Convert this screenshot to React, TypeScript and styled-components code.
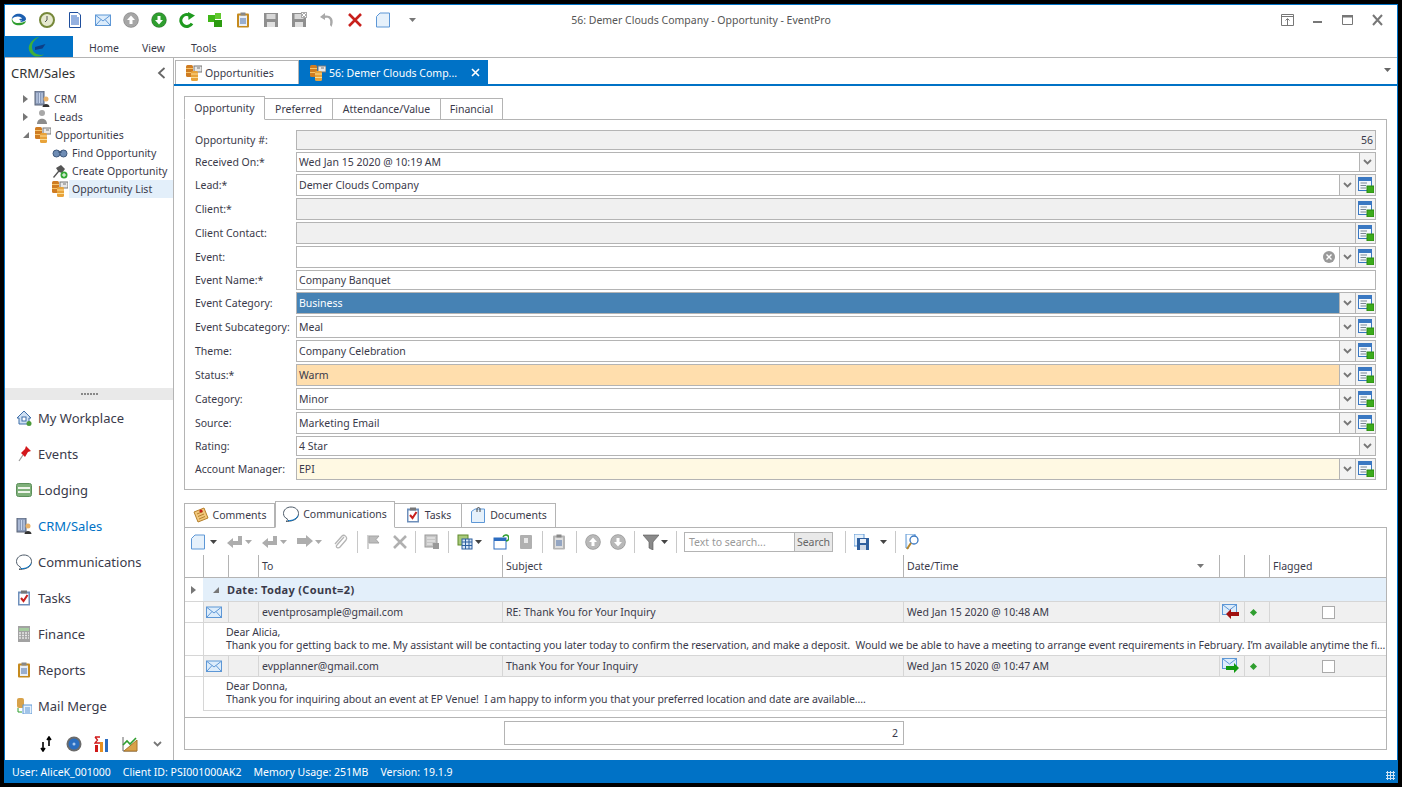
import React from "react";
import styled, { createGlobalStyle } from "styled-components";

const GlobalStyle = createGlobalStyle`
  html, body { margin: 0; padding: 0; background: #000; }
  * { box-sizing: border-box; }
  body { font-family: "Noto Sans", "Liberation Sans", sans-serif; font-size: 10.5px; color: #3a3a4a; }
`;

const BLUE = "#0072c6";
const LINE = "#b4b4b4";

/* ---------- icons ---------- */
const Ico = ({ s = 16, children }: { s?: number; children: React.ReactNode }) => (
  <svg width={s} height={s} viewBox="0 0 16 16" style={{ display: "block", flexShrink: 0 }}>
    {children}
  </svg>
);

const Logo = () => (
  <Ico>
    <path d="M15 9C14 13 9 14 5 13C2 12 0 9 1 6C1 9 4 11 7 11C10 11 13 10 15 9Z" fill="#2f9e2f" />
    <path d="M1 7C1 3 6 1 10 2C13 3 15 5 15 7C15 9 12 10 9 10C11 9 12 7 10 5.5C8 4 4 4 1 7Z" fill="#1c5fb0" />
    <path d="M8 7L12 6.5L10 9Z" fill="#1c5fb0" />
  </Ico>
);
const AppLogo = () => (
  <Ico s={24}>
    <path d="M11 1C5 3 2 8 5 12C7 15 11 15 14 13C10 14 6 12 6 8C6 5 8 3 11 1Z" fill="#3fae3a" />
    <path d="M8 8L15 6L13 9L8 10Z" fill="#0d3f86" />
  </Ico>
);
const Clock = () => (
  <Ico>
    <circle cx="8" cy="8" r="7" fill="#e6e9cf" stroke="#76883a" strokeWidth="2" />
    <path d="M8 4V8L6 10" fill="none" stroke="#555" />
  </Ico>
);
const DocLines = () => (
  <Ico>
    <path d="M2.5.5H11L13.5 3V15.5H2.5Z" fill="#fff" stroke="#1f4e9c" />
    <path d="M4 4H10M4 6H12M4 8H12M4 10H12M4 12H12" stroke="#2a62c0" />
  </Ico>
);
const Mail = () => (
  <Ico>
    <rect x=".5" y="3" width="15" height="10.5" fill="#dcecfb" stroke="#5d97d6" />
    <path d="M1 3.5L8 9L15 3.5M1 13L6 7.5M15 13L10 7.5" fill="none" stroke="#5d97d6" />
  </Ico>
);
const CircleArrow = ({ c, up }: { c: string; up?: boolean }) => (
  <Ico>
    <circle cx="8" cy="8" r="7.5" fill={c} stroke="#0003" />
    <path d={up ? "M8 3.5L12 8H9.5V12H6.5V8H4Z" : "M8 12.5L12 8H9.5V4H6.5V8H4Z"} fill="#fff" />
  </Ico>
);
const Refresh = () => (
  <Ico>
    <path d="M13 11.5A6 6 0 1 1 11 3.4" fill="none" stroke="#1f9a1f" strokeWidth="3" />
    <path d="M9 0L16 3.5L9.5 8Z" fill="#1f9a1f" />
  </Ico>
);
const Cubes = () => (
  <Ico>
    <rect x="1" y="3" width="7" height="7" fill="#3fb618" />
    <rect x="8" y="1" width="6" height="6" fill="#62c92f" />
    <rect x="7" y="8" width="8" height="7" fill="#2c9b10" />
  </Ico>
);
const Clipboard = ({ c = "#c58a1e", f = "#e8eef7" }: { c?: string; f?: string }) => (
  <Ico>
    <rect x="2" y="1.5" width="12" height="14" rx="1" fill={c} />
    <rect x="4" y="3.5" width="8" height="10.5" fill={f} />
    <rect x="5.5" y=".5" width="5" height="3" fill="#888" />
    <path d="M5 7H11M5 9H11M5 11H11" stroke="#4b6ea8" />
  </Ico>
);
const Floppy = ({ x }: { x?: boolean }) => (
  <Ico>
    <path d="M1 1H15V15H1Z" fill="#8f8f8f" />
    <rect x="3.5" y="2" width="9" height="5" fill="#d8d8d8" />
    <rect x="4" y="10" width="8" height="5" fill="#e0e0e0" />
    {x && <path d="M10 0H16V6H10Z" fill="#aaa" />}
    {x && <path d="M11 1L15 5M15 1L11 5" stroke="#fff" />}
  </Ico>
);
const Undo = () => (
  <Ico>
    <path d="M6 1L1 5L6 8V6C10 5 12 7 11 13L12.5 15C15.5 8 13 3 6 3.5Z" fill="#a9a9a9" />
  </Ico>
);
const RedX = ({ c = "#c8201c" }: { c?: string }) => (
  <Ico>
    <path d="M2 2L14 14M14 2L2 14" stroke={c} strokeWidth="2.6" />
  </Ico>
);
const Page = ({ c = "#5d97d6" }: { c?: string }) => (
  <Ico>
    <path d="M1.5 4.5L5 1H14.5V15H1.5Z" fill="#e6f1fb" stroke={c} />
  </Ico>
);
const Opp = () => (
  <Ico>
    <rect x="8" y="1" width="8" height="6" fill="#e8e8e8" stroke="#777" />
    <path d="M11 3H14" stroke="#777" />
    <rect x="0" y="0" width="7" height="12" rx="1.5" fill="#cf7c22" />
    <rect x="0" y="3" width="7" height="1" fill="#f6c46a" />
    <rect x="0" y="7" width="7" height="1" fill="#f6c46a" />
    <rect x="5" y="6" width="7" height="10" rx="1.5" fill="#e8a33a" />
    <rect x="5" y="8.5" width="7" height="1" fill="#fbdc96" />
    <rect x="5" y="12" width="7" height="1" fill="#fbdc96" />
  </Ico>
);
const Crm = () => (
  <Ico>
    <rect x="1" y="0" width="9" height="14" fill="#8a9ab8" stroke="#5a6478" />
    <path d="M3 2V12M5.5 2V12M8 2V12" stroke="#c9d6ee" />
    <circle cx="12" cy="8" r="2.5" fill="#e9b26a" />
    <path d="M8.5 16C8.5 12 15.5 12 15.5 16Z" fill="#333" />
  </Ico>
);
const Person = () => (
  <Ico>
    <circle cx="8" cy="4" r="3" fill="#a8a8a8" />
    <path d="M3 15C3 8 13 8 13 15Z" fill="#8c8c8c" />
  </Ico>
);
const Binoculars = () => (
  <Ico>
    <circle cx="4.5" cy="8.5" r="3.5" fill="#6f8db5" stroke="#40597d" />
    <circle cx="11.5" cy="8.5" r="3.5" fill="#6f8db5" stroke="#40597d" />
    <rect x="6.5" y="6" width="3" height="2" fill="#40597d" />
  </Ico>
);
const PinPlus = () => (
  <Ico>
    <path d="M1 14L6 8L4 5L9 2L13 6L10 10L7 9L2 15Z" fill="#555" />
    <circle cx="12" cy="12" r="3.5" fill="#35a835" />
    <path d="M12 10V14M10 12H14" stroke="#fff" />
  </Ico>
);
const House = () => (
  <Ico>
    <path d="M1 8L8 1L15 8H13V14H3V8Z" fill="#cfe0f3" stroke="#3f6ea8" />
    <rect x="6" y="7" width="4" height="4" fill="#fff" stroke="#3f6ea8" />
    <circle cx="13" cy="13.5" r="2.5" fill="#4c9a3a" />
  </Ico>
);
const RedPin = () => (
  <Ico>
    <path d="M3 15L7 9" stroke="#999" strokeWidth="1.2" />
    <path d="M5 7L9 3L10 0L15 5L12 6L9 11Z" fill="#d3181c" />
  </Ico>
);
const Bed = () => (
  <Ico>
    <rect x=".5" y="1.5" width="15" height="13" rx="2" fill="#7fb07a" stroke="#5c8f5a" />
    <rect x="2" y="5" width="12" height="2" fill="#eef5ea" />
    <rect x="2" y="9" width="12" height="2" fill="#eef5ea" />
  </Ico>
);
const Bubble = () => (
  <Ico>
    <path d="M8 1C3.5 1 .5 4 .5 7.5C.5 10 2 12 4.5 13C4.5 14 4 15 3 15.5C8 15.5 11 14 12 13.5C14 12.5 15.5 10.5 15.5 7.5C15.5 4 12.5 1 8 1Z" fill="#fff" stroke="#4d5a68" />
    <path d="M5 14.5C9 14.8 13 13.5 15 9.5" fill="none" stroke={BLUE} />
  </Ico>
);
const TasksIco = () => (
  <Ico>
    <rect x="2" y="1.5" width="12" height="14" fill="#6e8fbb" />
    <rect x="3.5" y="3.5" width="9" height="10.5" fill="#fff" />
    <rect x="5" y=".5" width="6" height="3" fill="#777" />
    <path d="M5 8L7.5 11L11.5 5" fill="none" stroke="#c8201c" strokeWidth="2" />
  </Ico>
);
const Calc = () => (
  <Ico>
    <rect x="2" y="0" width="12" height="16" fill="#a2a2a2" />
    <rect x="3" y="2" width="10" height="3" fill="#a6cca0" />
    <path d="M3 7H13M3 9.5H13M3 12H13" stroke="#e6e6e6" strokeDasharray="2 1" strokeWidth="1.4" />
  </Ico>
);
const Merge = () => (
  <Ico>
    <rect x="1" y="0" width="7" height="10" rx="2" fill="#d8a24a" />
    <path d="M2 10V14H6" fill="none" stroke="#2f9e2f" />
    <rect x="7" y="7" width="9" height="9" fill="#e6f1fb" stroke="#5d97d6" />
    <path d="M9 10H14M9 12H14M9 14H14" stroke="#5d97d6" />
  </Ico>
);
const Sort = () => (
  <Ico>
    <path d="M5 6V14M3 12L5 15L7 12M11 10V1M9 4L11 1L13 4" fill="none" stroke="#000" strokeWidth="1.6" />
  </Ico>
);
const Disc = () => (
  <Ico>
    <circle cx="8" cy="8" r="7.5" fill="#6b6b6b" />
    <circle cx="8" cy="8" r="5.5" fill="#2a6ec0" />
    <circle cx="8" cy="8" r="1.5" fill="#a9c8ee" />
  </Ico>
);
const SigmaBars = () => (
  <Ico>
    <path d="M1 1H6M1 1L3.5 4L1 7H6" fill="none" stroke="#d01818" strokeWidth="1.3" />
    <rect x="1" y="9" width="3" height="7" fill="#d01818" />
    <rect x="6" y="6" width="3" height="10" fill="#e89020" />
    <rect x="11" y="3" width="3" height="13" fill="#2c6cc0" />
  </Ico>
);
const ChartIco = () => (
  <Ico>
    <path d="M1 1V15H15" fill="none" stroke="#666" />
    <path d="M2 15L15 4V15Z" fill="#d9a24a" stroke="#a8742a" />
    <path d="M1 9L5 5L8 8L14 2" fill="none" stroke="#2f9e2f" strokeWidth="1.6" />
  </Ico>
);
const Lookup = () => (
  <Ico>
    <rect x=".5" y=".5" width="13" height="13" fill="#f4f8fd" stroke="#3a78c2" />
    <rect x="1" y="1" width="12" height="3" fill="#3a78c2" />
    <path d="M2.5 6H9M2.5 8.5H8M2.5 11H8" stroke="#7b8794" />
    <rect x="9" y="9" width="7" height="7" fill="#3cab1c" stroke="#2a8a10" />
  </Ico>
);
const ClearIco = () => (
  <svg width={12} height={12} viewBox="0 0 12 12" style={{ display: "block" }}>
    <circle cx="6" cy="6" r="6" fill="#999" />
    <path d="M3.5 3.5L8.5 8.5M8.5 3.5L3.5 8.5" stroke="#fff" strokeWidth="1.4" />
  </svg>
);
const Chevron = ({ c = "#777" }: { c?: string }) => (
  <svg width={9} height={6} viewBox="0 0 9 6" style={{ display: "block" }}>
    <path d="M1 1L4.5 4.5L8 1" fill="none" stroke={c} strokeWidth="1.8" />
  </svg>
);
const Caret = ({ c = "#444" }: { c?: string }) => (
  <svg width={7} height={4} viewBox="0 0 7 4" style={{ display: "block" }}>
    <path d="M0 0H7L3.5 4Z" fill={c} />
  </svg>
);
const Arrow = ({ c, right }: { c: string; right?: boolean }) => (
  <svg width={18} height={16} viewBox="0 0 18 16" style={{ display: "block" }}>
    <rect x=".5" y=".5" width="14" height="10" fill="#dcecfb" stroke="#5d97d6" />
    <path d="M1 1L7.5 6L14 1" fill="none" stroke="#5d97d6" />
    {right ? <path d="M4 8H12V5L17 10L12 15V12H4Z" fill={c} /> : <path d="M17 8H9V5L4 10L9 15V12H17Z" fill={c} />}
  </svg>
);
const Filter = () => (
  <Ico>
    <path d="M0 1H16L10 8V16L6 14V8Z" fill="#8a8a8a" stroke="#555" strokeWidth=".6" />
  </Ico>
);
const Reply = ({ flip }: { flip?: boolean }) => (
  <Ico>
    <path
      d={flip ? "M0 4H9V1L16 7L9 13V10H0Z" : "M15 2V11H6V14L0 9L6 4V7H11V2Z"}
      fill="#adadad"
    />
  </Ico>
);
const Clip = () => (
  <Ico>
    <path d="M12 3L5 11C3 13 6 15 8 13L14 6C16 3 12 0 10 2L3 10" fill="none" stroke="#b5b5b5" strokeWidth="1.3" />
  </Ico>
);
const Flag = () => (
  <Ico>
    <path d="M2 1V15M3 2H13L10 5.5L13 9H3Z" fill="#bcbcbc" stroke="#a5a5a5" />
  </Ico>
);
const Grids = () => (
  <Ico>
    <rect x="1" y="1" width="10" height="10" fill="#a8c97a" stroke="#5f8a2a" />
    <rect x="5" y="5" width="10" height="10" fill="#d7e6f7" stroke="#2c5f9e" />
    <path d="M5 8H15M5 11.5H15M8.5 5V15M12 5V15" stroke="#2c5f9e" />
  </Ico>
);
const WinRefresh = () => (
  <Ico>
    <rect x="1" y="4" width="12" height="11" fill="#fff" stroke="#2c6cc0" />
    <rect x="1" y="4" width="12" height="3" fill="#2c6cc0" />
    <path d="M10 3A3 3 0 1 1 13 7" fill="none" stroke="#2f9e2f" strokeWidth="1.5" />
  </Ico>
);
const GrayDoc = () => (
  <Ico>
    <rect x="2" y="1" width="12" height="14" rx="1" fill="#b0b0b0" />
    <rect x="6" y="4" width="4" height="5" fill="#e8e8e8" />
  </Ico>
);
const FormGray = () => (
  <Ico>
    <rect x="1" y="1" width="12" height="12" fill="#c6c6c6" stroke="#999" />
    <path d="M3 4H11M3 7H11M3 10H8" stroke="#f0f0f0" />
    <rect x="9" y="9" width="6" height="6" fill="#999" />
  </Ico>
);
const SaveBlue = () => (
  <Ico>
    <rect x="0" y="0" width="10" height="12" fill="#e6f1fb" stroke="#5d97d6" />
    <rect x="3" y="4" width="12" height="12" fill="#2f5f9e" />
    <rect x="6" y="5" width="6" height="4" fill="#e8eef7" />
    <rect x="6" y="11" width="6" height="5" fill="#cfd8e6" />
  </Ico>
);
const Zoomer = () => (
  <Ico>
    <path d="M1 0H10V3M1 0V14H4" fill="#e6f1fb" stroke="#5d97d6" />
    <circle cx="9" cy="6" r="4" fill="#fff" stroke="#3a78c2" strokeWidth="1.3" />
    <path d="M6 9L2 15" stroke="#b8862a" strokeWidth="2" />
  </Ico>
);
const NoteIco = () => (
  <Ico>
    <path d="M1 5L11 1L15 11L5 15Z" fill="#f2c77c" stroke="#b5802c" />
    <path d="M4 7L10 4.5M5 9.5L11 7M6 12L12 9.5" stroke="#b5802c" />
    <circle cx="8" cy="4" r="1.6" fill="#c8201c" />
  </Ico>
);
const DocClip = () => (
  <Ico>
    <path d="M1.5 4.5L5 2H14.5V15.5H1.5Z" fill="#e6f1fb" stroke="#5d97d6" />
    <path d="M7 5V2C7 0 10 0 10 2V5" fill="none" stroke="#444" />
  </Ico>
);

/* ---------- shell ---------- */
const Screen = styled.div`
  width: 1402px;
  height: 787px;
  padding: 4px;
  background: #000;
  overflow: hidden;
`;
const Win = styled.div`
  width: 1394px;
  height: 779px;
  background: #fff;
  border: 1px solid ${BLUE};
  border-bottom: 0;
  display: flex;
  flex-direction: column;
`;
const TitleBar = styled.div`
  height: 31px;
  padding-bottom: 2px;
  display: grid;
  grid-template-columns: 1fr auto 1fr;
  align-items: center;
`;
const QuickBar = styled.div`
  display: flex;
  align-items: center;
  gap: 12px;
  padding-left: 6px;
`;
const WinTitle = styled.div`
  color: #555;
`;
const WinButtons = styled.div`
  display: flex;
  justify-content: flex-end;
  align-items: center;
  gap: 17px;
  padding-right: 13px;
`;
const Ribbon = styled.div`
  height: 22px;
  border-bottom: 1px solid ${LINE};
  display: flex;
`;
const AppBtn = styled.div`
  width: 68px;
  height: 21px;
  background: ${BLUE};
  display: flex;
  align-items: center;
  justify-content: center;
  padding-right: 8px;
  margin-right: 16px;
`;
const RibbonTab = styled.div<{ $w: number }>`
  width: ${(p) => p.$w}px;
  line-height: 24px;
`;
const Body = styled.div`
  flex: 1;
  min-height: 0;
  display: flex;
`;
const Status = styled.div`
  height: 23px;
  background: ${BLUE};
  color: #fff;
  display: flex;
  align-items: center;
  gap: 12px;
  padding-left: 7px;
  position: relative;
`;
const Grip = styled.div`
  position: absolute;
  right: 2px;
  bottom: 3px;
  width: 9px;
  height: 9px;
  background: radial-gradient(circle, #cfe4f5 1px, transparent 1.2px) 0 0 / 3px 3px;
`;

/* ---------- sidebar ---------- */
const Side = styled.aside`
  width: 169px;
  border-right: 1px solid ${LINE};
  display: flex;
  flex-direction: column;
`;
const SideHead = styled.div`
  height: 30px;
  display: flex;
  align-items: center;
  justify-content: space-between;
  padding: 0 7px 1px 6px;
  font-size: 13px;
  color: #333;
`;
const Tree = styled.div`
  flex: 1;
  padding-top: 2px;
`;
const TreeRow = styled.div<{ $indent: number }>`
  height: 18px;
  display: flex;
  align-items: center;
  padding-left: ${(p) => p.$indent}px;
  gap: 4px;
`;
const TreeLabel = styled.span<{ $sel?: boolean }>`
  flex: 1;
  line-height: 18px;
  white-space: nowrap;
  margin-left: ${(p) => (p.$sel ? -3 : 0)}px;
  padding-left: ${(p) => (p.$sel ? 3 : 0)}px;
  background: ${(p) => (p.$sel ? "#e3effa" : "transparent")};
`;
const Twist = styled.span<{ $open?: boolean }>`
  width: 0;
  height: 0;
  margin-right: 2px;
  border-style: solid;
  ${(p) =>
    p.$open
      ? "border-width: 0 0 6px 6px; border-color: transparent transparent #777 transparent;"
      : "border-width: 4px 0 4px 5px; border-color: transparent transparent transparent #777;"}
`;
const Splitter = styled.div`
  height: 12px;
  background: #e9e9e9;
  display: flex;
  align-items: center;
  justify-content: center;
  gap: 1px;
  span {
    width: 2px;
    height: 2px;
    background: #888;
  }
`;
const NavItem = styled.div<{ $active?: boolean }>`
  height: 36px;
  display: flex;
  align-items: center;
  gap: 6px;
  padding-left: 11px;
  font-size: 13px;
  color: ${(p) => (p.$active ? BLUE : "#3a3a4a")};
`;
const NavFoot = styled.div`
  height: 36px;
  display: flex;
  align-items: center;
  gap: 12px;
  padding: 3px 0 0 33px;
  svg:last-child {
    margin-left: 3px;
  }
`;

/* ---------- document tabs ---------- */
const Main = styled.main`
  flex: 1;
  min-width: 0;
  display: flex;
  flex-direction: column;
`;
const DocBar = styled.div`
  height: 28px;
  padding: 2px 6px 0 1px;
  display: flex;
  border-bottom: 2px solid ${BLUE};
`;
const DocTab = styled.div<{ $active?: boolean; $w: number }>`
  width: ${(p) => p.$w}px;
  height: 24px;
  display: flex;
  align-items: center;
  gap: 3px;
  padding: 0 7px 0 10px;
  background: ${(p) => (p.$active ? BLUE : "#fff")};
  color: ${(p) => (p.$active ? "#fff" : "#3a3a4a")};
  border: 1px solid ${(p) => (p.$active ? BLUE : LINE)};
  border-bottom: 0;
`;
const DocTabName = styled.span`
  flex: 1;
`;
const DocCaret = styled.div`
  margin-left: auto;
  padding-top: 8px;
`;
const Content = styled.div`
  flex: 1;
  min-height: 0;
  padding: 10px 10px 10px 10px;
  display: flex;
  flex-direction: column;
`;
const TabStrip = styled.div`
  display: flex;
  align-items: flex-end;
  position: relative;
  z-index: 1;
  margin-bottom: -1px;
`;
const FormTab = styled.div<{ $active?: boolean; $w: number; $h: number }>`
  width: ${(p) => p.$w}px;
  height: ${(p) => (p.$active ? p.$h : p.$h - 2)}px;
  padding-bottom: ${(p) => (p.$h > 24 ? 2 : 0)}px;
  display: flex;
  align-items: center;
  justify-content: center;
  gap: 4px;
  background: #fff;
  border: 1px solid ${LINE};
  border-left-width: ${(p) => (p.$active ? 1 : 0)}px;
  border-bottom: 1px solid ${(p) => (p.$active ? "#fff" : LINE)};
  &:first-child {
    border-left-width: 1px;
  }
`;

/* ---------- form ---------- */
const FormPanel = styled.section`
  border: 1px solid ${LINE};
  padding: 10px 10px 9px 10px;
  display: flex;
  flex-direction: column;
  gap: 2px;
  margin-bottom: 11px;
`;
const Row = styled.div<{ $h: number }>`
  height: ${(p) => p.$h}px;
  display: flex;
`;
const Label = styled.label<{ $h: number }>`
  width: 101px;
  line-height: ${(p) => p.$h}px;
  white-space: nowrap;
`;
const Field = styled.div<{ $bg?: string; $fg?: string; $right?: boolean }>`
  flex: 1;
  min-width: 0;
  border: 1px solid ${LINE};
  background: ${(p) => p.$bg || "#fff"};
  color: ${(p) => p.$fg || "#3a3a4a"};
  display: flex;
  align-items: center;
  justify-content: ${(p) => (p.$right ? "flex-end" : "flex-start")};
  padding: 0 2px 1px;
`;
const ClearBtn = styled.span`
  margin-left: auto;
  margin-right: 2px;
`;
const SideBtn = styled.div<{ $w: number }>`
  width: ${(p) => p.$w}px;
  border: 1px solid ${LINE};
  border-left: 0;
  background: #f3f3f3;
  display: flex;
  align-items: center;
  justify-content: center;
`;

/* ---------- lower grid ---------- */
const GridPanel = styled.section`
  flex: 1;
  min-height: 0;
  border: 1px solid ${LINE};
  display: flex;
  flex-direction: column;
`;
const Toolbar = styled.div`
  height: 27px;
  display: flex;
  align-items: center;
  padding-left: 5px;
`;
const Slot = styled.div<{ $w: number; $ml?: number }>`
  width: ${(p) => p.$w}px;
  margin-left: ${(p) => p.$ml || 0}px;
  display: flex;
  justify-content: center;
  flex-shrink: 0;
`;
const Sep = styled.div<{ $ml: number }>`
  width: 1px;
  height: 22px;
  margin-left: ${(p) => p.$ml}px;
  background: #c8c8c8;
  flex-shrink: 0;
`;
const SearchBox = styled.div`
  width: 149px;
  height: 20px;
  margin-left: 7px;
  border: 1px solid ${LINE};
  display: flex;
  flex-shrink: 0;
`;
const SearchInput = styled.div`
  flex: 1;
  padding-left: 4px;
  line-height: 18px;
  color: #999;
`;
const SearchBtn = styled.div`
  width: 38px;
  background: #e9e9e9;
  border-left: 1px solid ${LINE};
  color: #666;
  text-align: center;
  line-height: 18px;
`;
const COLS = "18px 25px 30px 244px 401px 316px 25px 25px 1fr";
const HeadRow = styled.div`
  height: 23px;
  display: grid;
  grid-template-columns: ${COLS};
  border-bottom: 1px solid ${LINE};
`;
const HeadCell = styled.div`
  border-left: 1px solid ${LINE};
  padding: 0 3px;
  line-height: 22px;
  display: flex;
  align-items: center;
  justify-content: space-between;
  &:first-child {
    border-left: 0;
  }
`;
const SortCaret = styled.span`
  padding-right: 12px;
`;
const Rows = styled.div`
  flex: 1;
  min-height: 0;
  display: flex;
  flex-direction: column;
`;
const GroupRow = styled.div`
  height: 23px;
  display: flex;
  align-items: center;
  font-weight: 700;
  font-size: 11px;
  letter-spacing: 0.35px;
`;
const Expander = styled.div`
  width: 18px;
  display: flex;
  justify-content: center;
`;
const GroupBody = styled.div`
  flex: 1;
  height: 100%;
  background: #e3effa;
  display: flex;
  align-items: center;
  gap: 6px;
  padding-left: 10px;
`;
const DataRow = styled.div`
  height: 22px;
  display: grid;
  grid-template-columns: ${COLS};
  background: #f0f0f0;
  border-top: 1px solid #d6d6d6;
  border-bottom: 1px solid #d6d6d6;
`;
const Cell = styled.div<{ $center?: boolean; $nudge?: number }>`
  display: flex;
  align-items: center;
  justify-content: ${(p) => (p.$center ? "center" : "flex-start")};
  padding: 0 ${(p) => (p.$center ? 0 : 3)}px;
  padding-right: ${(p) => (p.$nudge ? p.$nudge : p.$center ? 0 : 3)}px;
  border-left: 1px solid #d6d6d6;
  white-space: nowrap;
  overflow: hidden;
  &:first-child {
    background: #fff;
    border-left: 0;
  }
`;
const Check = styled.span`
  width: 13px;
  height: 13px;
  background: #fff;
  border: 1px solid #aaa;
`;
const Diamond = styled.span`
  width: 5px;
  height: 5px;
  background: #2f9e2f;
  transform: rotate(45deg);
`;
const Preview = styled.div<{ $h: number; $top: number }>`
  height: ${(p) => p.$h}px;
  margin-left: 18px;
  padding: ${(p) => p.$top}px 4px 0 22px;
  border-left: 1px solid #d6d6d6;
  line-height: 13px;
  letter-spacing: -0.07px;
  white-space: pre;
  overflow: hidden;
  color: #3a3a4a;
`;
const RowsEnd = styled.div`
  margin-left: 18px;
  border-top: 1px solid #d6d6d6;
`;
const Footer = styled.div`
  height: 32px;
  border-top: 1px solid ${LINE};
  padding: 3px 0 0 319px;
`;
const SumBox = styled.div`
  width: 400px;
  height: 24px;
  border: 1px solid ${LINE};
  line-height: 22px;
  text-align: right;
  padding-right: 5px;
`;

/* ---------- data ---------- */
const fields: {
  label: string;
  h: number;
  value?: string;
  bg?: string;
  fg?: string;
  right?: boolean;
  dd?: boolean;
  lookup?: boolean;
  clear?: boolean;
}[] = [
  { label: "Opportunity #:", h: 20, value: "56", bg: "#f0f0f0", right: true },
  { label: "Received On:*", h: 20, value: "Wed Jan 15 2020 @ 10:19 AM", dd: true },
  { label: "Lead:*", h: 22, value: "Demer Clouds Company", dd: true, lookup: true },
  { label: "Client:*", h: 22, bg: "#f0f0f0", lookup: true },
  { label: "Client Contact:", h: 22, bg: "#f0f0f0", lookup: true },
  { label: "Event:", h: 22, clear: true, dd: true, lookup: true },
  { label: "Event Name:*", h: 20, value: "Company Banquet" },
  { label: "Event Category:", h: 22, value: "Business", bg: "#4682b4", fg: "#fff", dd: true, lookup: true },
  { label: "Event Subcategory:", h: 22, value: "Meal", dd: true, lookup: true },
  { label: "Theme:", h: 22, value: "Company Celebration", dd: true, lookup: true },
  { label: "Status:*", h: 22, value: "Warm", bg: "#ffdead", dd: true, lookup: true },
  { label: "Category:", h: 22, value: "Minor", dd: true, lookup: true },
  { label: "Source:", h: 22, value: "Marketing Email", dd: true, lookup: true },
  { label: "Rating:", h: 20, value: "4 Star", dd: true },
  { label: "Account Manager:", h: 22, value: "EPI", bg: "#fff9e3", dd: true, lookup: true },
];

const navItems: [string, React.ReactNode][] = [
  ["My Workplace", <House />],
  ["Events", <RedPin />],
  ["Lodging", <Bed />],
  ["CRM/Sales", <Crm />],
  ["Communications", <Bubble />],
  ["Tasks", <TasksIco />],
  ["Finance", <Calc />],
  ["Reports", <Clipboard />],
  ["Mail Merge", <Merge />],
];

const CaretSlot = ({ ml = 1 }: { ml?: number }) => (
  <Slot $w={8} $ml={ml}>
    <Caret c="#aaa" />
  </Slot>
);

export default function App() {
  return (
    <>
      <GlobalStyle />
      <Screen>
        <Win>
          <TitleBar>
            <QuickBar>
              <Logo />
              <Clock />
              <DocLines />
              <Mail />
              <CircleArrow c="#a6a6a6" up />
              <CircleArrow c="#2f9e2f" />
              <Refresh />
              <Cubes />
              <Clipboard />
              <Floppy />
              <Floppy x />
              <Undo />
              <RedX />
              <Page />
              <Slot $w={7} $ml={6}>
                <Caret c="#777" />
              </Slot>
            </QuickBar>
            <WinTitle>56: Demer Clouds Company - Opportunity - EventPro</WinTitle>
            <WinButtons>
              <svg width={13} height={12} viewBox="0 0 13 12">
                <path d="M.5.5H12.5V11.5H.5ZM.5 2.5H12.5M6.5 11V5M4.5 6.5L6.5 4.5L8.5 6.5" fill="none" stroke="#777" />
              </svg>
              <svg width={13} height={12} viewBox="0 0 13 12">
                <rect x="2" y="7" width="9" height="2" fill="#777" />
              </svg>
              <svg width={13} height={12} viewBox="0 0 13 12">
                <path d="M1.5 1.5H11.5V10.5H1.5Z" fill="none" stroke="#777" />
                <rect x="1" y="1" width="11" height="2.5" fill="#777" />
              </svg>
              <svg width={13} height={12} viewBox="0 0 13 12">
                <path d="M2 1L11 11M11 1L2 11" stroke="#777" strokeWidth="2" />
              </svg>
            </WinButtons>
          </TitleBar>
          <Ribbon>
            <AppBtn>
              <AppLogo />
            </AppBtn>
            <RibbonTab $w={53}>Home</RibbonTab>
            <RibbonTab $w={49}>View</RibbonTab>
            <RibbonTab $w={50}>Tools</RibbonTab>
          </Ribbon>
          <Body>
            <Side>
              <SideHead>
                CRM/Sales
                <svg width={9} height={12} viewBox="0 0 9 12">
                  <path d="M7.5 1L2 6L7.5 11" fill="none" stroke="#666" strokeWidth="1.8" />
                </svg>
              </SideHead>
              <Tree>
                <TreeRow $indent={18}>
                  <Twist />
                  <Crm />
                  <TreeLabel>CRM</TreeLabel>
                </TreeRow>
                <TreeRow $indent={18}>
                  <Twist />
                  <Person />
                  <TreeLabel>Leads</TreeLabel>
                </TreeRow>
                <TreeRow $indent={18}>
                  <Twist $open />
                  <Opp />
                  <TreeLabel>Opportunities</TreeLabel>
                </TreeRow>
                <TreeRow $indent={47}>
                  <Binoculars />
                  <TreeLabel>Find Opportunity</TreeLabel>
                </TreeRow>
                <TreeRow $indent={47}>
                  <PinPlus />
                  <TreeLabel>Create Opportunity</TreeLabel>
                </TreeRow>
                <TreeRow $indent={47}>
                  <Opp />
                  <TreeLabel $sel>Opportunity List</TreeLabel>
                </TreeRow>
              </Tree>
              <Splitter>
                <span />
                <span />
                <span />
                <span />
                <span />
                <span />
              </Splitter>
              {navItems.map(([name, icon]) => (
                <NavItem key={name} $active={name === "CRM/Sales"}>
                  {icon}
                  {name}
                </NavItem>
              ))}
              <NavFoot>
                <Sort />
                <Disc />
                <SigmaBars />
                <ChartIco />
                <Chevron />
              </NavFoot>
            </Side>
            <Main>
              <DocBar>
                <DocTab $w={124}>
                  <Opp />
                  <DocTabName>Opportunities</DocTabName>
                </DocTab>
                <DocTab $w={189} $active>
                  <Opp />
                  <DocTabName>56: Demer Clouds Comp...</DocTabName>
                  <svg width={9} height={9} viewBox="0 0 9 9">
                    <path d="M1 1L8 8M8 1L1 8" stroke="#fff" strokeWidth="1.6" />
                  </svg>
                </DocTab>
                <DocCaret>
                  <Caret c="#666" />
                </DocCaret>
              </DocBar>
              <Content>
                <TabStrip>
                  <FormTab $h={24} $w={81} $active>
                    Opportunity
                  </FormTab>
                  <FormTab $h={24} $w={68}>Preferred</FormTab>
                  <FormTab $h={24} $w={108}>Attendance/Value</FormTab>
                  <FormTab $h={24} $w={62}>Financial</FormTab>
                </TabStrip>
                <FormPanel>
                  {fields.map((f) => (
                    <Row key={f.label} $h={f.h}>
                      <Label $h={f.h}>{f.label}</Label>
                      <Field $bg={f.bg} $fg={f.fg} $right={f.right}>
                        {f.value}
                        {f.clear && (
                          <ClearBtn>
                            <ClearIco />
                          </ClearBtn>
                        )}
                      </Field>
                      {f.dd && (
                        <SideBtn $w={16}>
                          <Chevron />
                        </SideBtn>
                      )}
                      {f.lookup && (
                        <SideBtn $w={20}>
                          <Lookup />
                        </SideBtn>
                      )}
                    </Row>
                  ))}
                </FormPanel>
                <TabStrip>
                  <FormTab $h={27} $w={91}>
                    <NoteIco />
                    Comments
                  </FormTab>
                  <FormTab $h={27} $w={120} $active>
                    <Bubble />
                    Communications
                  </FormTab>
                  <FormTab $h={27} $w={67}>
                    <TasksIco />
                    Tasks
                  </FormTab>
                  <FormTab $h={27} $w={94}>
                    <DocClip />
                    Documents
                  </FormTab>
                </TabStrip>
                <GridPanel>
                  <Toolbar>
                    <Slot $w={16}>
                      <Page />
                    </Slot>
                    <Slot $w={14}>
                      <Caret />
                    </Slot>
                    <Slot $w={16} $ml={7}>
                      <Reply />
                    </Slot>
                    <CaretSlot />
                    <Slot $w={16} $ml={10}>
                      <Reply />
                    </Slot>
                    <CaretSlot />
                    <Slot $w={16} $ml={10}>
                      <Reply flip />
                    </Slot>
                    <CaretSlot />
                    <Slot $w={16} $ml={10}>
                      <Clip />
                    </Slot>
                    <Sep $ml={9} />
                    <Slot $w={16} $ml={8}>
                      <Flag />
                    </Slot>
                    <Slot $w={16} $ml={10}>
                      <RedX c="#b0b0b0" />
                    </Slot>
                    <Sep $ml={7} />
                    <Slot $w={16} $ml={8}>
                      <FormGray />
                    </Slot>
                    <Sep $ml={8} />
                    <Slot $w={16} $ml={8}>
                      <Grids />
                    </Slot>
                    <Slot $w={10}>
                      <Caret />
                    </Slot>
                    <Slot $w={16} $ml={10}>
                      <WinRefresh />
                    </Slot>
                    <Slot $w={16} $ml={9}>
                      <GrayDoc />
                    </Slot>
                    <Sep $ml={8} />
                    <Slot $w={16} $ml={8}>
                      <Clipboard c="#b5b5b5" f="#dedede" />
                    </Slot>
                    <Sep $ml={9} />
                    <Slot $w={16} $ml={8}>
                      <CircleArrow c="#b8b8b8" up />
                    </Slot>
                    <Slot $w={16} $ml={9}>
                      <CircleArrow c="#b8b8b8" />
                    </Slot>
                    <Sep $ml={8} />
                    <Slot $w={16} $ml={8}>
                      <Filter />
                    </Slot>
                    <Slot $w={8} $ml={1}>
                      <Caret />
                    </Slot>
                    <Sep $ml={8} />
                    <SearchBox>
                      <SearchInput>Text to search...</SearchInput>
                      <SearchBtn>Search</SearchBtn>
                    </SearchBox>
                    <Sep $ml={12} />
                    <Slot $w={16} $ml={8}>
                      <SaveBlue />
                    </Slot>
                    <Slot $w={8} $ml={9}>
                      <Caret />
                    </Slot>
                    <Sep $ml={8} />
                    <Slot $w={16} $ml={9}>
                      <Zoomer />
                    </Slot>
                  </Toolbar>
                  <HeadRow>
                    <HeadCell />
                    <HeadCell />
                    <HeadCell />
                    <HeadCell>To</HeadCell>
                    <HeadCell>Subject</HeadCell>
                    <HeadCell>
                      Date/Time
                      <SortCaret>
                        <Caret c="#777" />
                      </SortCaret>
                    </HeadCell>
                    <HeadCell />
                    <HeadCell />
                    <HeadCell>Flagged</HeadCell>
                  </HeadRow>
                  <Rows>
                    <GroupRow>
                      <Expander>
                        <Twist />
                      </Expander>
                      <GroupBody>
                        <Twist $open />
                        Date: Today (Count=2)
                      </GroupBody>
                    </GroupRow>
                    <DataRow>
                      <Cell />
                      <Cell $center $nudge={4}>
                        <Mail />
                      </Cell>
                      <Cell />
                      <Cell>eventprosample@gmail.com</Cell>
                      <Cell>RE: Thank You for Your Inquiry</Cell>
                      <Cell>Wed Jan 15 2020 @ 10:48 AM</Cell>
                      <Cell $center $nudge={3}>
                        <Arrow c="#a01010" />
                      </Cell>
                      <Cell $center $nudge={8}>
                        <Diamond />
                      </Cell>
                      <Cell $center>
                        <Check />
                      </Cell>
                    </DataRow>
                    <Preview $h={32} $top={3}>
                      {"Dear Alicia,\nThank you for getting back to me. My assistant will be contacting you later today to confirm the reservation, and make a deposit.  Would we be able to have a meeting to arrange event requirements in February. I’m available anytime the fi..."}
                    </Preview>
                    <DataRow>
                      <Cell />
                      <Cell $center $nudge={4}>
                        <Mail />
                      </Cell>
                      <Cell />
                      <Cell>evpplanner@gmail.com</Cell>
                      <Cell>Thank You for Your Inquiry</Cell>
                      <Cell>Wed Jan 15 2020 @ 10:47 AM</Cell>
                      <Cell $center $nudge={3}>
                        <Arrow c="#109a10" right />
                      </Cell>
                      <Cell $center $nudge={8}>
                        <Diamond />
                      </Cell>
                      <Cell $center>
                        <Check />
                      </Cell>
                    </DataRow>
                    <Preview $h={33} $top={3}>
                      {"Dear Donna,\nThank you for inquiring about an event at EP Venue!  I am happy to inform you that your preferred location and date are available...."}
                    </Preview>
                    <RowsEnd />
                  </Rows>
                  <Footer>
                    <SumBox>2</SumBox>
                  </Footer>
                </GridPanel>
              </Content>
            </Main>
          </Body>
          <Status>
            <span>User: AliceK_001000</span>
            <span>Client ID: PSI001000AK2</span>
            <span>Memory Usage: 251MB</span>
            <span>Version: 19.1.9</span>
            <Grip />
          </Status>
        </Win>
      </Screen>
    </>
  );
}
